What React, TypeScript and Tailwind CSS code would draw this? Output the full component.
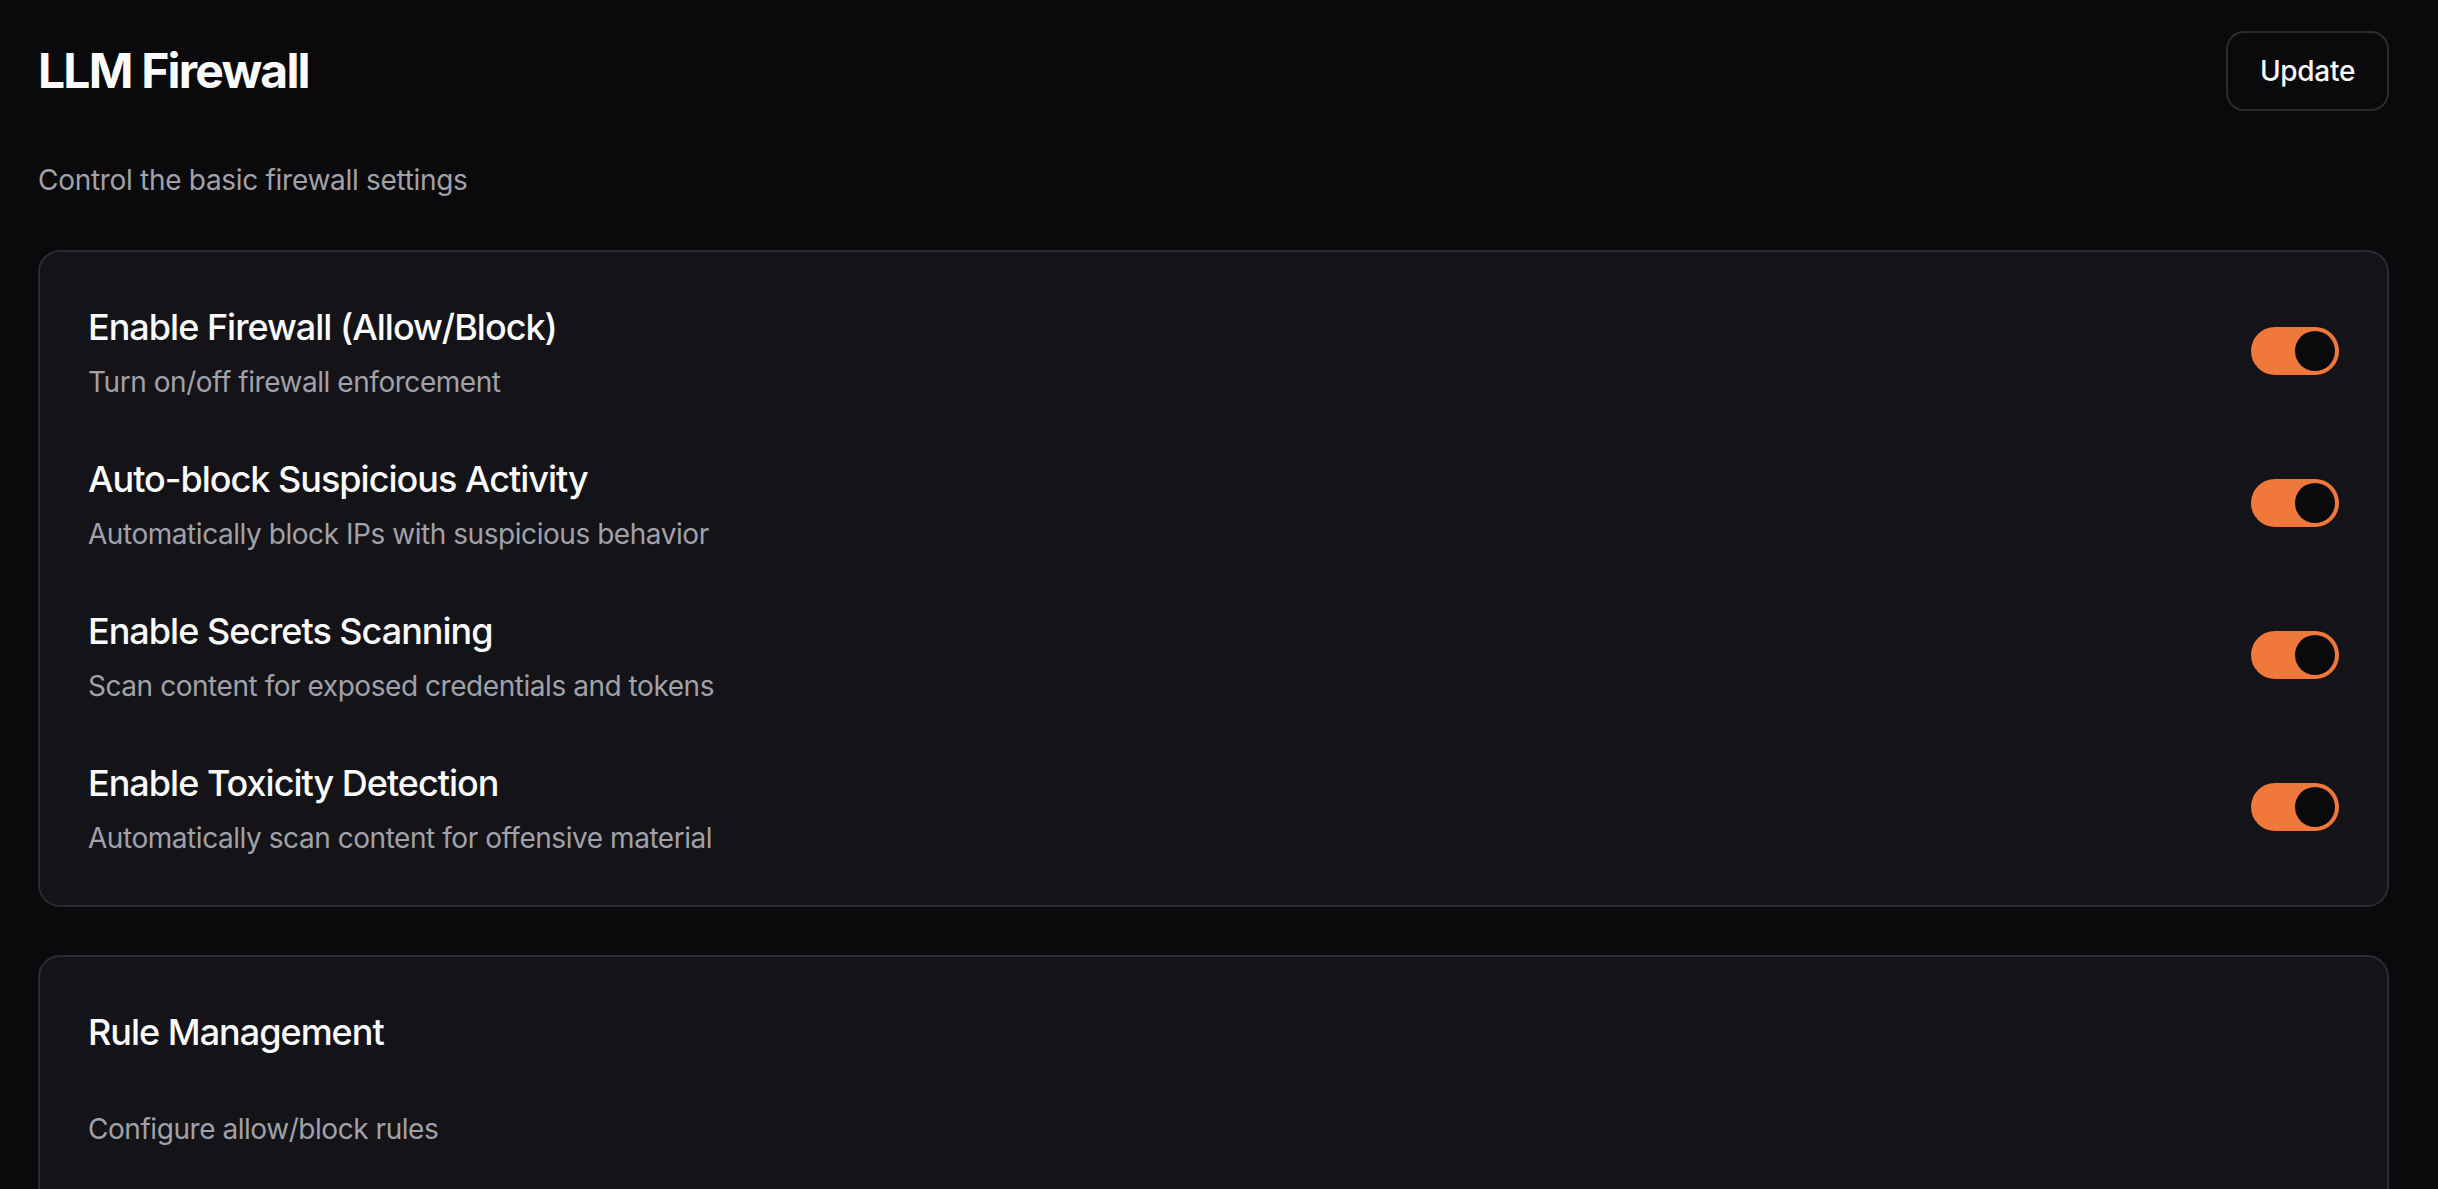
import { useState } from "react";

const settings = [
  { title: "Enable Firewall (Allow/Block)", desc: "Turn on/off firewall enforcement" },
  { title: "Auto-block Suspicious Activity", desc: "Automatically block IPs with suspicious behavior" },
  { title: "Enable Secrets Scanning", desc: "Scan content for exposed credentials and tokens" },
  { title: "Enable Toxicity Detection", desc: "Automatically scan content for offensive material" },
];

function Toggle({ on, onClick }: { on: boolean; onClick: () => void }) {
  return (
    <button
      onClick={onClick}
      className={`flex h-[48px] w-[88px] shrink-0 items-center rounded-full p-[4px] ${
        on ? "justify-end bg-[#f0783a]" : "justify-start bg-[#2b2b30]"
      }`}
    >
      <span className="block h-[40px] w-[40px] rounded-full bg-[#0a0a0c]" />
    </button>
  );
}

export default function App() {
  const [enabled, setEnabled] = useState<boolean[]>([true, true, true, true]);

  const flip = (i: number) => {
    setEnabled(enabled.map((v, idx) => (idx === i ? !v : v)));
  };

  return (
    <div
      className="h-screen overflow-hidden bg-[#0a0a0c] pl-[38px] pr-[49px] pt-[31px] text-[#fafafa]"
      style={{ fontFamily: "Inter, 'Noto Sans', sans-serif" }}
    >
      <div className="flex items-center justify-between">
        <h1 className="text-[48px] font-bold leading-[64px] tracking-[-1.8px]">LLM Firewall</h1>
        <button className="h-[80px] w-[163px] rounded-[18px] border-2 border-[#2b2b30] bg-[#0a0a0c] text-[28px] font-medium tracking-[-0.3px]">
          Update
        </button>
      </div>

      <p className="mt-[49px] text-[28px] leading-[40px] tracking-[-0.3px] text-[#a1a1aa]">
        Control the basic firewall settings
      </p>

      <div className="mt-[50px] rounded-[22px] border-2 border-[#2b2b30] bg-[#141418] px-[48px] py-[47px]">
        <div className="flex flex-col gap-[49px]">
          {settings.map((s, i) => (
            <div key={s.title} className="flex items-center justify-between">
              <div>
                <div className="text-[36px] font-medium leading-[56px] tracking-[-1px]">{s.title}</div>
                <div className="mt-[7px] text-[28px] leading-[40px] tracking-[-0.45px] text-[#a1a1aa]">{s.desc}</div>
              </div>
              <Toggle on={enabled[i]} onClick={() => flip(i)} />
            </div>
          ))}
        </div>
      </div>

      <div className="mt-[48px] min-h-[400px] rounded-[22px] border-2 border-[#2b2b30] bg-[#141418] px-[48px] py-[47px]">
        <h2 className="text-[36px] font-medium leading-[56px] tracking-[-1px]">Rule Management</h2>
        <p className="mt-[49px] text-[28px] leading-[40px] tracking-[-0.45px] text-[#a1a1aa]">
          Configure allow/block rules
        </p>
      </div>
    </div>
  );
}
